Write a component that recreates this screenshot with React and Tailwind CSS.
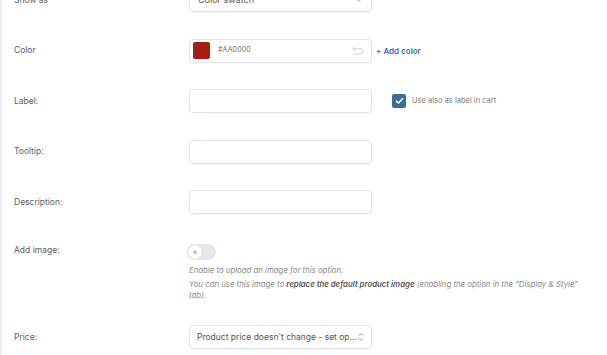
import React from 'react';

const Row = ({ label, children, top, className = '' }) => (
  <div className={`flex ${top ? 'items-start' : 'items-center'} ${className}`}>
    <div className={`w-[175px] shrink-0 text-[8.5px] text-[#5e5e5e] ${top ? 'pt-[3px]' : ''}`}>{label}</div>
    <div className="flex-1 min-w-0">{children}</div>
  </div>
);

const Field = ({ children, className = '' }) => (
  <div className={`h-[24px] w-[183px] rounded-[4px] border border-[#e2e3ea] bg-white shadow-[0_1px_2px_rgba(0,0,0,0.04)] ${className}`}>
    {children}
  </div>
);

const Chevron = () => (
  <svg width="8" height="10" viewBox="0 0 8 10" fill="none" stroke="#9a9ca6" strokeWidth="0.9" strokeLinecap="round" strokeLinejoin="round">
    <path d="M1.8 3.6 L4 1.6 L6.2 3.6" />
    <path d="M1.8 6.4 L4 8.4 L6.2 6.4" />
  </svg>
);

export default function App() {
  return (
    <div className="min-h-[355px] w-[607px] overflow-hidden bg-white border-l-2 border-[#ededed]" style={{ fontFamily: 'Inter, "Noto Sans", sans-serif' }}>
      <div className="-mt-[12px] flex flex-col gap-[26.5px] pl-[12px]">
        <Row label="Show as">
          <Field className="flex items-center justify-between px-[8px]">
            <span className="text-[9px] text-[#555]">Color swatch</span>
            <svg width="8" height="6" viewBox="0 0 8 6" fill="none" stroke="#a0a2aa" strokeWidth="0.9" strokeLinecap="round"><path d="M1.5 2 L4 4.3 L6.5 2" /></svg>
          </Field>
        </Row>

        <Row label="Color">
          <div className="flex items-center gap-[4px]">
            <Field className="flex w-[130px] items-center pl-[3px] pr-[7px]">
              <div className="h-[17px] w-[17px] rounded-[2px] bg-[#a31f14]" />
              <span className="ml-[8px] text-[7px] tracking-[0.02em] text-[#6e6e6e]">#AA0000</span>
              <svg className="ml-auto" width="12" height="9" viewBox="0 0 12 9" fill="none" stroke="#c9cbd1" strokeWidth="0.9" strokeLinecap="round" strokeLinejoin="round">
                <path d="M3 1 L1 2.8 L3 4.6" />
                <path d="M1 2.8 H8.5 A2.6 2.6 0 0 1 8.5 8 H2" />
              </svg>
            </Field>
            <span className="text-[8px] font-semibold text-[#3a6fb0]">+ Add color</span>
          </div>
        </Row>

        <Row label="Label:">
          <div className="flex items-center">
            <Field />
            <div className="ml-[20px] flex h-[14px] w-[14px] items-center justify-center rounded-[2px] bg-[#3a6e96]">
              <svg width="9" height="8" viewBox="0 0 9 8" fill="none" stroke="white" strokeWidth="1.6" strokeLinecap="round" strokeLinejoin="round"><path d="M1.5 4.3 L3.5 6 L7.5 1.8" /></svg>
            </div>
            <span className="ml-[6px] text-[7.5px] text-[#7a7a7a]">Use also as label in cart</span>
          </div>
        </Row>

        <Row label="Tooltip:">
          <Field />
        </Row>

        <Row label="Description:">
          <Field />
        </Row>

        <Row label="Add image:" top>
          <div className="pt-[3px] pr-[14px]">
            <div className="ml-[-2px] flex h-[16px] w-[29px] items-center rounded-full bg-[#e4e7ee] px-[1px]">
              <div className="flex h-[14px] w-[14px] items-center justify-center rounded-full bg-white shadow-[0_0_1px_rgba(0,0,0,0.25)]">
                <span className="text-[7px] leading-none text-[#777]">×</span>
              </div>
            </div>
            <div className="mt-[5px] text-[7.8px] italic leading-[11px] text-[#8a8a8a]">
              <p className="mb-[3px]">Enable to upload an image for this option.</p>
              <p>
                You can use this image to <b className="font-semibold text-[#555]">replace the default product image</b> (enabling the option in the "Display &amp; Style" tab).
              </p>
            </div>
          </div>
        </Row>

        <Row label="Price:" className="-mt-[2px]">
          <Field className="flex items-center justify-between pl-[7px] pr-[6px]">
            <span className="truncate text-[8.5px] text-[#555]">Product price doesn't change - set op...</span>
            <Chevron />
          </Field>
        </Row>
      </div>
    </div>
  );
}
